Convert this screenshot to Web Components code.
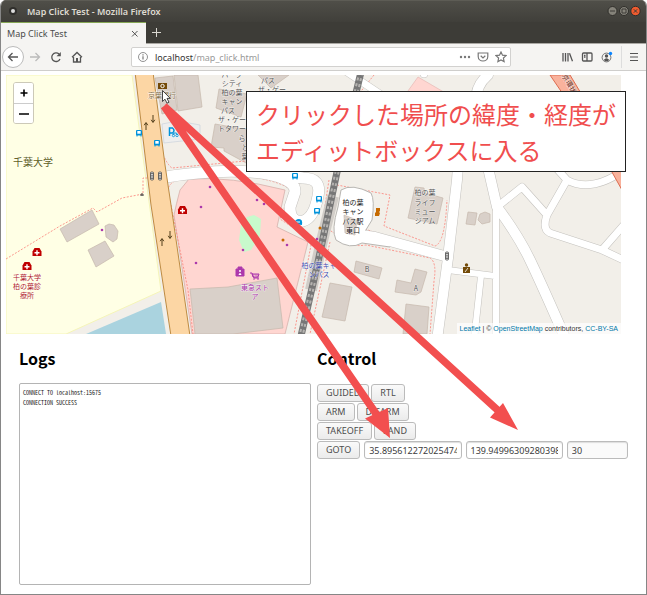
<!DOCTYPE html>
<html lang="ja">
<head>
<meta charset="utf-8">
<title>Map Click Test</title>
<style>
body{margin:0;background:#fff;font-family:"Noto Sans","Noto Sans CJK JP",sans-serif}
</style>
</head>
<body>
<browser-window>
  <title-bar slot="chrome">Map Click Test - Mozilla Firefox</title-bar>
  <tab-strip slot="chrome">Map Click Test</tab-strip>
  <nav-toolbar slot="chrome"></nav-toolbar>
  <map-view></map-view>
  <drone-console>
    <log-panel></log-panel>
    <control-panel></control-panel>
  </drone-console>
  <map-note slot="over">クリックした場所の緯度・経度が<br>エディットボックスに入る</map-note>
  <note-arrows slot="over"></note-arrows>
</browser-window>

<script>
const define = (name, html) => customElements.define(name, class extends HTMLElement {
  constructor() {
    super();
    this.attachShadow({mode: 'open'}).innerHTML = html;
  }
});

define('browser-window', `
<style>
:host{display:flex;flex-direction:column;position:relative;box-sizing:border-box;min-height:100vh;border:1px solid #868686;border-top:0;border-radius:6px 6px 0 0;overflow:hidden;background:#fff}
main{flex:1;display:flex;flex-direction:column;padding:4px 5px 9px}
</style>
<slot name="chrome"></slot>
<main><slot></slot></main>
<slot name="over"></slot>`);

define('title-bar', `
<style>
:host{display:flex;align-items:center;height:22px;padding:0 5px 0 8px;background:linear-gradient(#504f49,#403f3a);color:#dfdbd2;font-size:9px;font-weight:600;box-shadow:inset 0 1px #5d5c55}
svg.app{width:8px;height:8px;margin-right:10px}
span{flex:1}
svg.ctl{width:34px;height:12px}
</style>
<svg class="app" viewBox="0 0 8 8"><circle cx="4" cy="4" r="4" fill="#302f2c"/><circle cx="4" cy="4" r="2" fill="#ddd"/></svg>
<span><slot></slot></span>
<svg class="ctl" viewBox="0 0 34 12"><g stroke="#302f2b" stroke-width="1"><circle cx="5.500" cy="6" r="4.500" fill="#85837a"/><circle cx="17" cy="6" r="4.500" fill="#85837a"/><circle cx="28.500" cy="6" r="4.700" fill="#ef5b2f"/></g><path d="M3 6h5M15 4h4v4h-4zM26.800 4.300l3.400 3.400M30.200 4.300l-3.400 3.400" fill="none" stroke="#3c3b37"/></svg>`);

define('tab-strip', `
<style>
:host{display:flex;height:21px;background:#3d3c37;border-bottom:1px solid #aaa8a3}
.tab{display:flex;align-items:center;justify-content:space-between;box-sizing:border-box;width:145px;margin-bottom:-1px;padding:0 7px 0 6px;background:#f5f4f2;border-top:1px solid #86a755;color:#4c4c4c;font-size:9px}
button{border:0;padding:0;background:none;display:flex;align-items:center}
.new{padding-left:6px}
svg{width:9px;height:9px;fill:none;stroke:#555}
.new svg{stroke:#dad8d1;stroke-width:1}
</style>
<div class="tab"><slot></slot><button aria-label="Close tab"><svg viewBox="0 0 9 9"><path d="M2 2l5.500 5.500M7.500 2L2 7.500"/></svg></button></div>
<button class="new" aria-label="New tab"><svg viewBox="0 0 9 9"><path d="M4.500 0v9M0 4.500h9"/></svg></button>`);

define('nav-toolbar', `
<style>
:host{display:flex;align-items:center;height:26px;background:#f5f4f2;border-bottom:1px solid #cfcecc;padding:0 6px 0 1px}
button{border:0;padding:0;background:none;display:flex;flex:none}
svg{display:block;width:12px;height:12px;fill:none;stroke:#555;stroke-width:1.300}
.back{width:22px;height:22px;box-sizing:border-box;border:1px solid #bbb;border-radius:50%;background:#fff;align-items:center;justify-content:center}
.nav{display:flex;align-items:center;gap:9px;width:129px}
.nav .back{margin-right:-4px}
.url{flex:1;display:flex;align-items:center;box-sizing:border-box;height:20px;border:1px solid #d2d1cf;border-radius:2px;background:#fff;padding:0 3px 0 5px;min-width:0}
.address{flex:1;font-size:9px;color:#999;margin-left:6px;white-space:nowrap}
.address b{font-weight:400;color:#333}
.url button{margin-left:6px}
.url svg{stroke:#777;stroke-width:1.200}
.tools{display:flex;align-items:center;gap:8px;margin-left:50px}
.tools .menu{border-left:1px solid #ddd;padding:5px 0 5px 6px}
</style>
<div class="nav">
<button class="back" aria-label="Back"><svg viewBox="0 0 12 12"><path d="M11 6H1.500M5.500 2L1.500 6l4 4"/></svg></button>
<button aria-label="Forward"><svg viewBox="0 0 12 12" style="stroke:#bbb"><path d="M1 6h9.500M6.500 2l4 4-4 4"/></svg></button>
<button aria-label="Reload"><svg viewBox="0 0 12 12"><path d="M10 8A4.300 4.300 0 1 1 9 3"/><path d="M10.800 1v4.300H6.500z" fill="#555" stroke="none"/></svg></button>
<button aria-label="Home"><svg viewBox="0 0 12 12"><path d="M1 6.300L6 1.500l5 4.800M2.500 6v5h7V6"/><path d="M5 11V7h2v4z" fill="#555" stroke="none"/></svg></button>
</div>
<div class="url">
<svg viewBox="0 0 12 12" style="stroke-width:.8"><circle cx="6" cy="6" r="4.500"/><path d="M6 5.300v3.300M6 3.300v1.100" stroke-width="1.200"/></svg>
<span class="address"><b>localhost</b>/map_click.html</span>
<button aria-label="Page actions"><svg viewBox="0 0 12 12"><g fill="#777" stroke="none"><circle cx="2" cy="6" r="1.200"/><circle cx="6" cy="6" r="1.200"/><circle cx="10" cy="6" r="1.200"/></g></svg></button>
<button aria-label="Save to Pocket"><svg viewBox="0 0 12 12"><path d="M1.200 2h9.600v3.500c0 6-9.600 6-9.600 0zM3.700 4.800L6 7l2.300-2.200"/></svg></button>
<button aria-label="Bookmark"><svg viewBox="0 0 12 12"><path d="M6 1l1.500 3.200 3.500.4-2.600 2.400.7 3.600L6 8.900l-3.100 1.700.7-3.600L1 4.600l3.500-.4z"/></svg></button>
</div>
<div class="tools">
<button aria-label="Library"><svg viewBox="0 0 12 12"><path d="M2 2v8.500M4.500 2v8.500M7 2v8.500M8.500 2.300l3 8"/></svg></button>
<button aria-label="Sidebars"><svg viewBox="0 0 12 12"><rect x="1.500" y="2" width="9.500" height="8" rx="1"/><path d="M6 2v8M3 4.300h1.500M3 6h1.500"/></svg></button>
<button aria-label="Account"><svg viewBox="0 0 12 12"><circle cx="5.500" cy="6.500" r="4.400" stroke-width=".8"/><circle cx="5.500" cy="5" r="1.700" fill="#555" stroke="none"/><path d="M2.700 9q2.800-3.500 5.600 0-2.800 2.500-5.600 0z" fill="#555" stroke="none"/><circle cx="9.500" cy="2.500" r="1.700" fill="#0a84ff" stroke="none"/></svg></button>
<button class="menu" aria-label="Menu"><svg viewBox="0 0 12 12"><path d="M2 2.500h8M2 6h8M2 9.500h8" stroke-width="1"/></svg></button>
</div>`);

define('map-view', `
<style>
:host{display:block;position:relative;height:259px;margin-right:20px;overflow:hidden;background:#f2efe9}
.map{display:block;width:100%;height:100%}
.zoom{position:absolute;left:7px;top:7px;border:1px solid #ccc9b8;border-radius:3px;background:#fff;overflow:hidden}
.zoom button{display:flex;align-items:center;justify-content:center;width:19px;height:20px;border:0;padding:0;background:#fff}
.zoom button+button{border-top:1px solid #ccc}
.zoom svg{width:8px;height:8px;stroke:#000;stroke-width:1.600;overflow:visible}
.credit{position:absolute;right:0;bottom:0;padding:0 3px;background:#ffffffb3;color:#333;font:7px/11px "Liberation Sans",sans-serif}
.credit a{color:#0078a8;text-decoration:none}
.b{fill:#d9d0c9;stroke:#c5b7ac;stroke-width:.7}
.case{fill:none;stroke:#c4c2be;stroke-linejoin:round;stroke-linecap:round}
.road{fill:none;stroke:#fff;stroke-linejoin:round;stroke-linecap:round}
.foot{fill:none;stroke:#fa8c83;stroke-width:.9;stroke-dasharray:2 1.500}
text{font-family:"Noto Sans CJK JP",sans-serif;font-size:7px;fill:#555;text-anchor:middle;paint-order:stroke;stroke:#ffffff99;stroke-width:1px}
</style>
<svg class="map" viewBox="6 75 615 259" preserveAspectRatio="xMidYMid slice" role="img" aria-label="Map">
<defs>
<g id="bus"><rect x="-3" y="-3" width="6" height="5.500" rx="1" fill="#0092da"/><rect x="-1.700" y="-2" width="3.400" height="2.700" fill="#fff"/><path d="M-2 2v1.500M2 2v1.500" stroke="#0092da"/></g>
<g id="med"><path d="M-4.500 4V-.5L-2.500-4h5L4.500-.5V4z" fill="#bf0000"/><path d="M-2.500.8h5M0-1.700v5" stroke="#fff" stroke-width="1.400"/></g>
<g id="sig"><rect x="-1.500" y="-4" width="3" height="8" rx="1" fill="#eee" stroke="#444" stroke-width=".8"/><path d="M0-3v6" stroke="#333" stroke-width="1.300" stroke-dasharray="1.300 1"/></g>
<path id="up" d="M0 4V-3M-1.800-.8L0-3.500 1.800-.8" fill="none" stroke="#503c18"/>
<g id="roads">
<path d="M160 178C190 173 230 168 268 174Q296 180 295 192L290 207Q290 223 303 221Q314 218 318 196Q322 178 303 178L270 173" stroke-width="11"/>
<path d="M340 232L375 237 448 257" stroke-width="10"/>
<path d="M462 110L457 180 448 258 437 340" stroke-width="10"/>
<path d="M488 75Q470 90 478 120L489 172 497 207Q518 235 530 260T566 340" stroke-width="10"/>
<path d="M496 203V340M448 270L495 276M481 276L474 340" stroke-width="6"/>
<path d="M497 207L522 187 547 215Q542 229 550 233L602 250 630 263M602 250L630 218M547 215L567 180 540 150M567 180C585 190 606 183 622 171" stroke-width="7"/>
<path d="M347 72L383 96M424 72v2" stroke-width="7"/>
</g>
</defs>
<path d="M6 75H132L161 291 66 334H6z" fill="#ffffe5" stroke="#f5f5b8"/>
<path d="M161 302L166 334H86z" fill="#aad3df"/>
<path d="M189 179Q230 176 285 190L277 227 308 242 285 334H192L174 215Q176 205 180 190z" fill="#ffd6d1" stroke="#d6b0ab" stroke-width=".8"/>
<path d="M418 77L442 91 460 102H400z" fill="#ffd6d1" stroke="#e6b9b4" stroke-width=".7"/>
<path d="M162 124L178 121 200 125V139L164 143z" fill="#eee" stroke="#ccd3dd" stroke-width=".7"/>
<path d="M247 217L254 215 261 219 260 235 251 250 244 252 239 240 241 225z" fill="#c8facc"/>
<g class="b">
<path d="M60 229L92 210 99 224 67 242zM105 226l4-2 5 1 4 6-1 8-4 3-7-5zM88 250l17-9 9 15-18 11zM155 78l18-2 4 34-15 4zM174 75h24l4 32-24 4zM219 89l28 5-6 23-25-9zM215 124l33 6v34l-24-13v-3l-13-1zM258 75h31l-18 13zM190 289l38-2 49-9 6 50-50 6h-38z"/>
<path d="M356 261l26 7-3 11-25-7zM330 283l22 4-7 34-23-4zM415 187l9 1 1 5 18 5-6 26-29-6zM468 212l9 1-2 12-9-1zM480 214l5-2 5 2v8l-8 2-4-4zM415 269l12 3-6 20-5 3-21-3 2-12 14 3zM406 304l23 3-2 27h-24z"/>
</g>
<g class="foot">
<path d="M6 259L60 226 93 208 97 212 122 198 143 194V178H150M160 148Q167 165 172 168L245 161 295 168M168 205V190Q169 180 188 177L230 173Q280 180 291 190L280 219 312 240 294 334M171 205L188 290 193 334M329 180L322 225 337 235Q347 248 366 245L430 258Q437 262 434 281L430 334M337 185L390 195 384 226 435 246Q445 243 447 200M330 242L310 334M365 229L380 234M374 75L358 95"/>
</g>
<g class="case">
<path d="M160 178C190 173 230 168 268 174Q296 180 295 192L290 207Q290 223 303 221Q314 218 318 196Q322 178 303 178L270 173" stroke-width="12"/>
<path d="M340 232L375 237 448 257M462 110L457 180 448 258 437 340M488 75Q470 90 478 120L489 172 497 207Q518 235 530 260T566 340" stroke-width="11"/>
<path d="M496 203V340M448 270L495 276M481 276L474 340" stroke-width="7"/>
<path d="M497 207L522 187 547 215Q542 229 550 233L602 250 630 263M602 250L630 218M547 215L567 180 540 150M567 180C585 190 606 183 622 171M347 72L383 96M424 72v2" stroke-width="8"/>
</g>
<path d="M341 190Q352 183 371 193 375 200 372 220L364 233 392 239 390 247 362 243Q350 250 336 240 331 230 338 207z" fill="#fff" stroke="#b8b6b2"/>
<use href="#roads" class="road"/>
<path d="M344 215l13 5-2 15-10-2z" class="b"/>
<path d="M550 75h20l15 25h-18zM608 165l14 25v-30z" fill="#f9b29c" stroke="#dc6c50"/>
<path d="M135 72L151 205 171 336H190L171 205 165 165 153 72z" fill="#fcd6a4" stroke="#bd8b43"/>
<path d="M333 196L321 245 311 290" fill="none" stroke="#d1cdc8" stroke-width="12"/>
<g fill="none"><path d="M361 72L337 172 318 262 301 336" stroke="#777" stroke-width="7"/><path d="M361 72L337 172 318 262 301 336" stroke="#b5b3b0" stroke-width="5" stroke-dasharray="3 3"/><path d="M361 72L337 172 318 262 301 336" stroke="#777" stroke-width="1"/></g>
<g fill="#ac39ac"><circle cx="102" cy="230" r="1.300"/><circle cx="201" cy="207" r="1.300"/><circle cx="196" cy="263" r="1.300"/><circle cx="210" cy="187" r="1.300"/><circle cx="257" cy="200" r="1.300"/><circle cx="264" cy="204" r="1.300"/><circle cx="243" cy="250" r="1.300"/><circle cx="287" cy="245" r="1.300"/><circle cx="317" cy="239" r="1.300"/></g>
<g fill="#c66a00"><circle cx="283" cy="240" r="1.500"/><circle cx="320" cy="228" r="1.500"/><path d="M376 208h4v3l-1 1 1 1-1 3h-4v-3l1-1z"/></g>
<use href="#bus" x="139" y="133"/><use href="#bus" x="157" y="143"/><use href="#bus" x="295" y="176"/><use href="#bus" x="319" y="199"/><use href="#bus" x="317" y="211"/>
<path d="M294 224q1-5 5-5t3 6z" fill="#0092da"/><path d="M296 222h4" stroke="#fff"/>
<use href="#med" x="37" y="252"/><use href="#med" x="27" y="266"/><use href="#med" x="182.500" y="210"/>
<use href="#sig" x="152" y="176"/><use href="#sig" x="160" y="176"/><use href="#sig" x="447" y="256"/>
<use href="#up" x="146" y="126"/><use href="#up" transform="translate(153 119) rotate(180)"/><use href="#up" x="162" y="242"/><use href="#up" transform="translate(170 235) rotate(180)"/>
<path d="M140 195h4M142 193v3" stroke="#444"/>
<path d="M158 83h9v6h-9z" fill="#734a08"/><circle cx="162.500" cy="86" r="1.700" fill="#734a08" stroke="#fff"/>
<path d="M169.500 136v-8h3q3 2.500 0 5h-3" fill="none" stroke="#0092da" stroke-width="1.500"/><path d="M173 135l1-2h2.500l1 2" fill="none" stroke="#0092da"/><circle cx="173.500" cy="135.500" r="1.200" fill="none" stroke="#0092da" stroke-width=".8"/><circle cx="177" cy="135.500" r="1.200" fill="none" stroke="#0092da" stroke-width=".8"/>
<path d="M236 269h8v7h-8zM238 269v-2h4v2" fill="#ac39ac" stroke="#ac39ac"/><circle cx="240" cy="271" r="1" fill="#fff"/><path d="M238.500 275q1.500-4 3 0" fill="#fff"/>
<path d="M250 273h2l2 5h5M252 274h7l-1 3h-5z" fill="#ac39ac66" stroke="#ac39ac"/><circle cx="254" cy="279" r=".8" fill="#ac39ac"/><circle cx="258" cy="279" r=".8" fill="#ac39ac"/>
<path d="M463 267h7v6h-7z" fill="#734a08"/><circle cx="466.500" cy="265" r="1.700" fill="#734a08"/><path d="M465 272l3-4" stroke="#fff" stroke-width=".8"/>
<text x="33" y="166" style="font-size:10px;fill:#5f5f22">千葉大学</text>
<text x="27" y="280" style="fill:#b01c2c">千葉大学</text><text x="27" y="289" style="fill:#b01c2c">柏の葉診</text><text x="27" y="298" style="fill:#b01c2c">療所</text>
<text x="162" y="98" style="fill:#84714b">京葉銀行</text>
<text x="232" y="77">パーク</text><text x="232" y="86">シティ</text><text x="232" y="95">柏の葉</text><text x="232" y="104">キャン</text><text x="228" y="113">パス</text><text x="232" y="122">ザ・ゲー</text><text x="232" y="131">トタワー</text><text x="242" y="141">ら</text><text x="245" y="150">と</text><text x="245" y="159">葉</text>
<text x="268" y="83">パス</text><text x="272" y="92">ザ・ゲー</text>
<text x="353" y="205" style="fill:#222">柏の葉</text><text x="353" y="214" style="fill:#222">キャン</text><text x="353" y="224" style="fill:#222">パス駅</text><text x="353" y="233" style="fill:#222">東口</text>
<text x="425" y="195">柏の葉</text><text x="425" y="205">ライフ</text><text x="425" y="214">ミュー</text><text x="425" y="223">ジアム</text>
<text x="319" y="268" style="fill:#3d4bb0">柏の葉キャ</text><text x="319" y="277" style="fill:#3d4bb0">ンパス</text>
<text x="255" y="290" style="fill:#ac39ac">東急スト</text><text x="255" y="299" style="fill:#ac39ac">ア</text>
<text x="367" y="272">B</text><text x="416" y="291">A</text>
<text transform="translate(567 85) rotate(58)" style="fill:#6b2c20">京環状</text>
</svg>
<div class="zoom"><button aria-label="Zoom in"><svg viewBox="0 0 8 8"><path d="M4 .5v7M.5 4h7"/></svg></button><button aria-label="Zoom out"><svg viewBox="0 0 8 8"><path d="M-1 4h10"/></svg></button></div>
<div class="credit"><a href="#leaflet">Leaflet</a> | © <a href="#osm">OpenStreetMap</a> contributors, <a href="#license">CC-BY-SA</a></div>`);

define('drone-console', `
<style>
:host{flex:1;display:grid;grid-template-columns:minmax(0,292fr) minmax(0,311fr);column-gap:6px;padding:0 13px}
</style>
<slot></slot>`);

define('log-panel', `
<style>
:host{display:flex;flex-direction:column}
h2{margin:12px 0 13px;font:700 16px/24px "Noto Sans CJK JP",sans-serif}
textarea{flex:1;box-sizing:border-box;width:100%;min-height:120px;resize:none;border:1px solid #b4b4b4;border-radius:2px;padding:4px 3px;font:6px/10px "Noto Sans Mono CJK JP","Noto Sans CJK JP",monospace;color:#222;outline:0;display:block}
</style>
<h2 id="h">Logs</h2>
<textarea aria-labelledby="h" readonly>CONNECT TO localhost:15675
CONNECTION SUCCESS</textarea>`);

define('control-panel', `
<style>
:host{display:flex;flex-direction:column}
h2{margin:12px 0 14px;font:700 16px/24px "Noto Sans CJK JP",sans-serif}
.rows{display:grid;grid-template-columns:minmax(0,1fr);gap:1px}
.row{display:flex;gap:2px}
button,input{box-sizing:border-box;height:18px;border:1px solid #bbb;border-radius:3px;font:9px/14px "Noto Sans",sans-serif;color:#4c4c4c}
button{padding:0 8px;background:linear-gradient(#fafafa,#ebebeb)}
form{display:flex;gap:4px;margin:0}
input{flex:99 1 0;min-width:0;padding:0 4px;background:#fff;box-shadow:inset 0 1px 1px #ddd;color:#3c3c3c}
input.alt{flex-grow:58;background:#fafafa}
</style>
<h2>Control</h2>
<div class="rows">
<div class="row"><button>GUIDED</button><button>RTL</button></div>
<div class="row"><button>ARM</button><button>DISARM</button></div>
<div class="row"><button>TAKEOFF</button><button>LAND</button></div>
<form><button type="button">GOTO</button><input aria-label="Latitude" value="35.895612272025474"><input aria-label="Longitude" value="139.94996309280398"><input class="alt" aria-label="Altitude" value="30"></form>
</div>`);

define('map-note', `
<style>
:host{display:block;position:absolute;left:245px;top:91px;box-sizing:border-box;border:1px solid #222;background:#fff;padding:4px 9px 3px;color:#f04e4e;font:24px/36px "Noto Sans CJK JP",sans-serif;white-space:nowrap}
</style>
<slot></slot>`);

define('note-arrows', `
<style>
:host{display:block;position:absolute;left:-1px;top:0;pointer-events:none}
svg{display:block;width:647px;height:460px}
</style>
<svg viewBox="0 0 647 460" aria-hidden="true">
<path d="M164 106L379 418M164 106L503 415" stroke="#f24f4f" stroke-width="7.500"/>
<path d="M390 438L365 418.500 388 408zM518 430L490 417.500 503 403z" fill="#f24f4f"/>
<path d="M162.500 90.500v11l2.500-2.300 2 4 2-1-2-3.800h3.300z" fill="#fff" stroke="#333" stroke-width=".9"/>
</svg>`);
</script>
</body>
</html>
